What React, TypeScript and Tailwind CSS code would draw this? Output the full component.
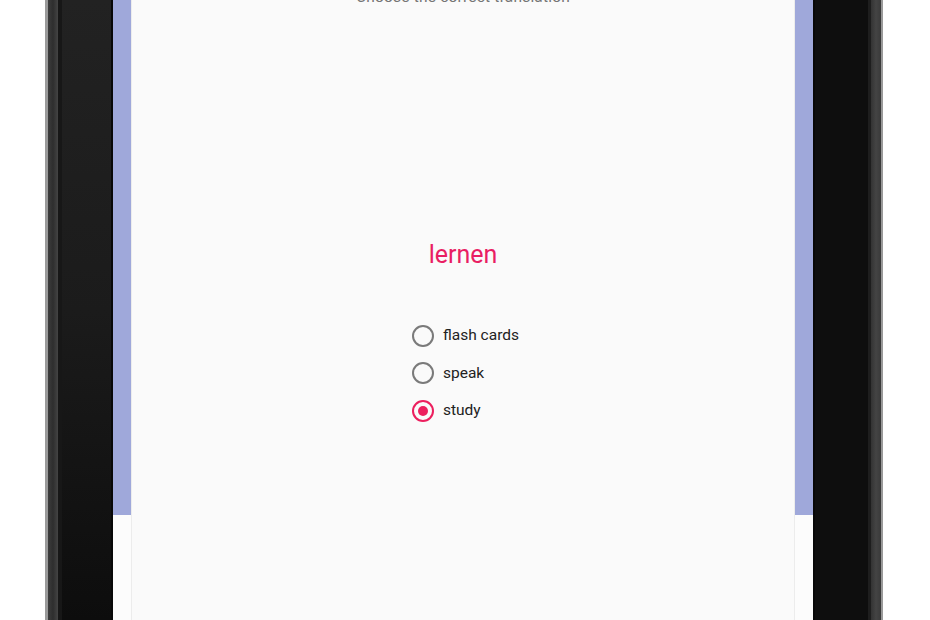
import React, { useState } from 'react';

const options = ['flash cards', 'speak', 'study'];

const Radio: React.FC<{ label: string; checked: boolean; onSelect: () => void }> = ({ label, checked, onSelect }) => (
    <button onClick={onSelect} className="flex items-center h-[37.5px] gap-[9px] text-left">
        <span
            className={`w-[22px] h-[22px] rounded-full border-2 flex items-center justify-center ${
                checked ? 'border-[#ec1f5e]' : 'border-[#7a7a7a]'
            }`}
        >
            {checked && <span className="w-[10px] h-[10px] rounded-full bg-[#ec1f5e]" />}
        </span>
        <span className="text-[15.5px] text-[#222]">{label}</span>
    </button>
);

export default function App() {
    const [selected, setSelected] = useState(2);

    return (
        <div
            className="w-[930px] h-[620px] overflow-hidden bg-white flex"
            style={{ fontFamily: 'Roboto, "Noto Sans", sans-serif' }}
        >
            <div className="w-[45px]" />
            {/* left bezel */}
            <div className="w-[3px] bg-[#9a9a9a]" />
            <div className="w-[10px] bg-gradient-to-r from-[#3d3d3d] via-[#2e2e2e] to-[#444]" />
            <div className="w-[4px] bg-[#171717]" />
            <div className="w-[49px] bg-gradient-to-b from-[#222] via-[#1b1b1b] to-[#0d0d0d]" />
            <div className="w-[2px] bg-[#080808]" />

            {/* screen */}
            <div className="w-[700px] flex flex-col relative">
                <div className="h-[515px] bg-[#9fa8da]" />
                <div className="flex-1 bg-[#fcfcfc]" />
                <div className="absolute inset-y-0 left-[18px] w-[664px] bg-[#fafafa] border-x border-[#ececec] flex flex-col items-center">
                    <p className="-mt-[13px] text-[15.5px] leading-[20px] text-[#757575] tracking-[0.2px]">Choose the correct translation</p>
                    <h1 className="mt-[232px] text-[25px] text-[#e91e63] leading-[32px]">lernen</h1>
                    <div className="mt-[46px] flex flex-col ml-[5px]">
                        {options.map((o, i) => (
                            <Radio key={o} label={o} checked={selected === i} onSelect={() => setSelected(i)} />
                        ))}
                    </div>
                </div>
            </div>

            {/* right bezel */}
            <div className="w-[2px] bg-[#080808]" />
            <div className="w-[53px] bg-[#0e0e0e]" />
            <div className="w-[3px] bg-[#1e1e1e]" />
            <div className="w-[10px] bg-gradient-to-r from-[#333] via-[#444] to-[#3a3a3a]" />
            <div className="w-[2px] bg-[#9a9a9a]" />
            <div className="flex-1" />
        </div>
    );
}
